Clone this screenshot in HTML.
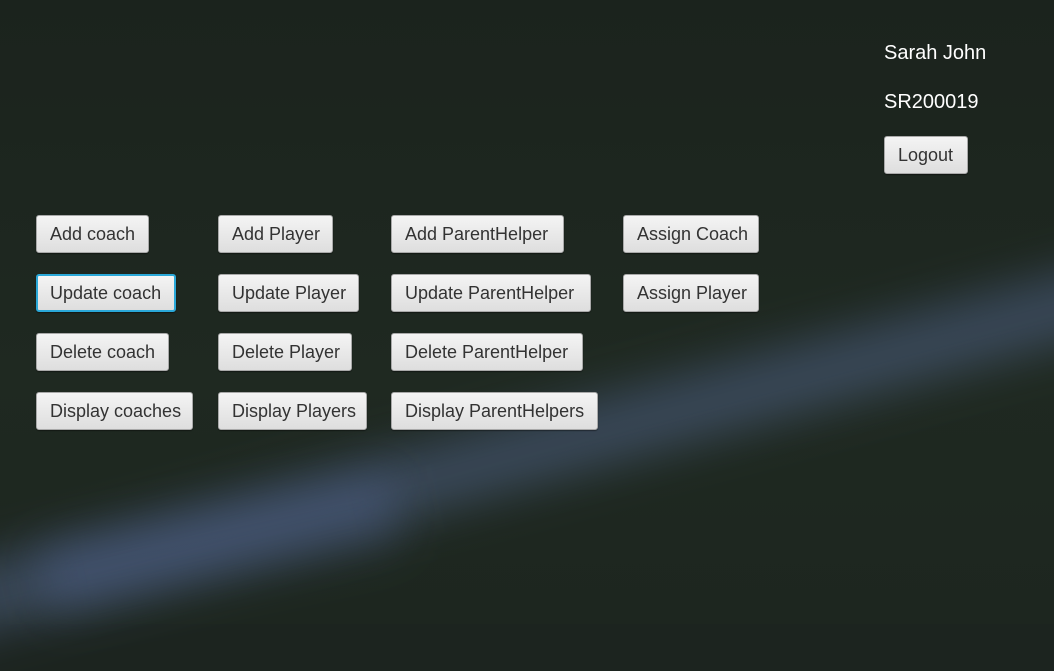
<!DOCTYPE html>
<html><head><style>
html,body{margin:0;padding:0;}
body{width:1054px;height:624px;overflow:hidden;position:relative;background:#1c241f;font-family:"Liberation Sans",sans-serif;}
.bg{position:absolute;inset:0;background:linear-gradient(180deg,#1b231d,#1f2921 60%,#1d261f);}
.stripe{position:absolute;left:-100px;top:385px;width:1300px;height:120px;transform:rotate(-15deg);transform-origin:50% 50%;background:linear-gradient(180deg,transparent,rgba(80,100,140,.42) 35%,rgba(90,110,155,.48) 55%,transparent);filter:blur(16px);}
.stripe2{position:absolute;left:40px;top:510px;width:360px;height:70px;transform:rotate(-12deg);background:rgba(90,110,170,.28);filter:blur(22px);}
.btn{position:absolute;height:38px;box-sizing:border-box;border:1px solid #a9a9a9;border-radius:3px;background:linear-gradient(#f4f4f4,#dedede);box-shadow:0 1px 1px rgba(0,0,0,.4);color:#333;font-size:18px;line-height:36px;padding-left:13px;white-space:nowrap;}
.focus{border:2px solid #2aa8d8;line-height:34px;padding-left:12px;}
.t{position:absolute;color:#fff;font-size:20px;}
</style></head><body>
<div class="bg"></div><div class="stripe"></div><div class="stripe2"></div>
<div class="t" style="left:884px;top:42px">Sarah John</div>
<div class="t" style="left:884px;top:91px">SR200019</div>
<div class="btn" style="left:884px;top:136px;width:84px">Logout</div>

<div class="btn" style="left:36px;top:215px;width:113px">Add coach</div>
<div class="btn" style="left:218px;top:215px;width:115px">Add Player</div>
<div class="btn" style="left:391px;top:215px;width:173px">Add ParentHelper</div>
<div class="btn" style="left:623px;top:215px;width:136px">Assign Coach</div>

<div class="btn focus" style="left:36px;top:274px;width:140px">Update coach</div>
<div class="btn" style="left:218px;top:274px;width:141px">Update Player</div>
<div class="btn" style="left:391px;top:274px;width:200px">Update ParentHelper</div>
<div class="btn" style="left:623px;top:274px;width:136px">Assign Player</div>

<div class="btn" style="left:36px;top:333px;width:133px">Delete coach</div>
<div class="btn" style="left:218px;top:333px;width:134px">Delete Player</div>
<div class="btn" style="left:391px;top:333px;width:192px">Delete ParentHelper</div>

<div class="btn" style="left:36px;top:392px;width:157px">Display coaches</div>
<div class="btn" style="left:218px;top:392px;width:149px">Display Players</div>
<div class="btn" style="left:391px;top:392px;width:207px">Display ParentHelpers</div>
</body></html>
